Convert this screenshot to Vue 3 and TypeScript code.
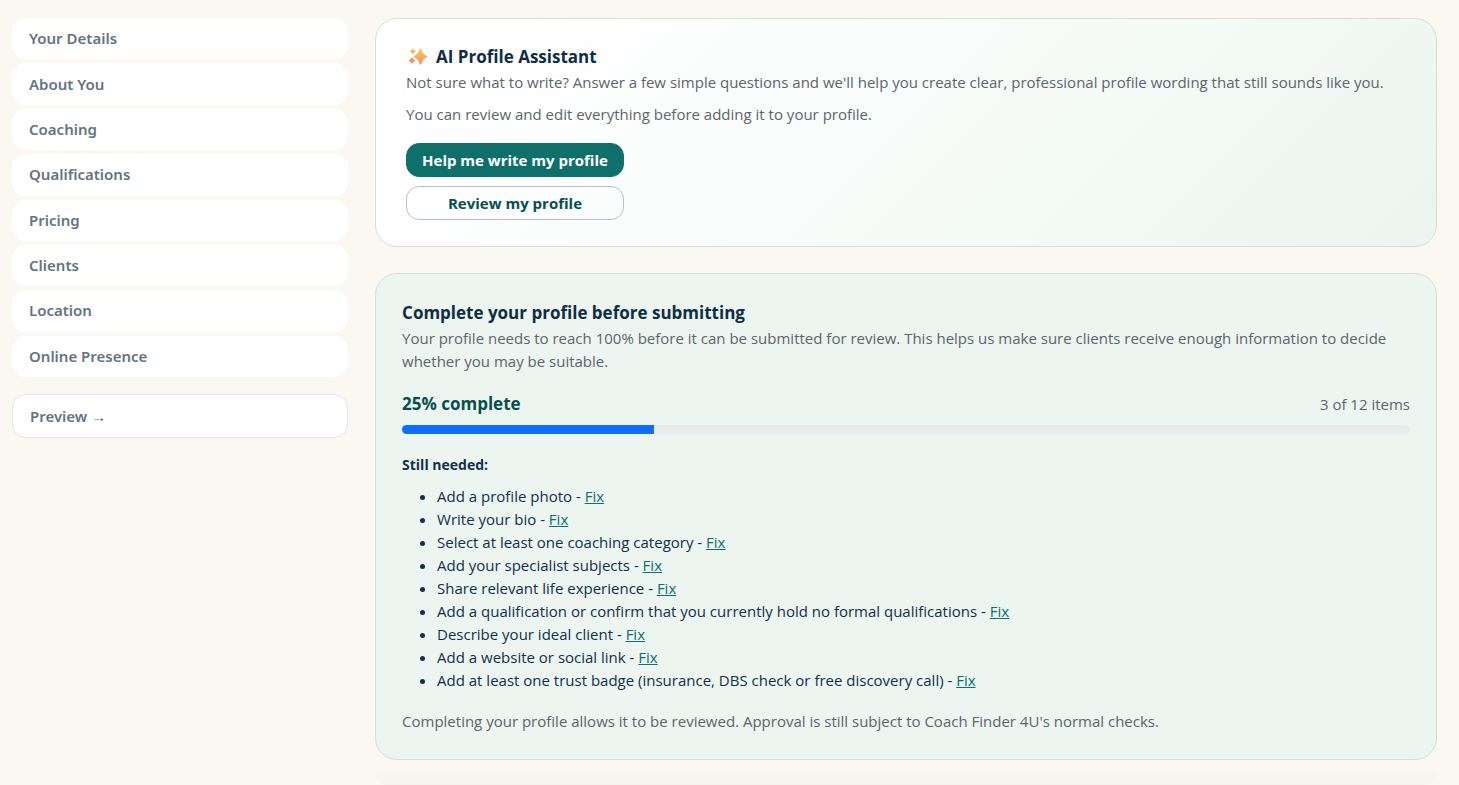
<script setup lang="ts">
interface Section {
  id: string
  label: string
}

interface MissingItem {
  text: string
  target: string
}

const sections: Section[] = [
  { id: 'details', label: 'Your Details' },
  { id: 'about', label: 'About You' },
  { id: 'coaching', label: 'Coaching' },
  { id: 'qualifications', label: 'Qualifications' },
  { id: 'pricing', label: 'Pricing' },
  { id: 'clients', label: 'Clients' },
  { id: 'location', label: 'Location' },
  { id: 'online', label: 'Online Presence' },
]

const missing: MissingItem[] = [
  { text: 'Add a profile photo', target: 'details' },
  { text: 'Write your bio', target: 'about' },
  { text: 'Select at least one coaching category', target: 'coaching' },
  { text: 'Add your specialist subjects', target: 'coaching' },
  { text: 'Share relevant life experience', target: 'about' },
  { text: 'Add a qualification or confirm that you currently hold no formal qualifications', target: 'qualifications' },
  { text: 'Describe your ideal client', target: 'clients' },
  { text: 'Add a website or social link', target: 'online' },
  { text: 'Add at least one trust badge (insurance, DBS check or free discovery call)', target: 'qualifications' },
]

const total = 12
const done = total - missing.length
const percent = Math.round((done / total) * 100)
</script>

<template>
  <div class="page">
    <nav class="sidebar" aria-label="Profile sections">
      <div class="sections">
        <a v-for="s in sections" :key="s.id" class="nav-item" :href="'#' + s.id">{{ s.label }}</a>
      </div>
      <a class="nav-item preview" href="#preview">Preview →</a>
    </nav>

    <main class="content">
      <section class="card assistant">
        <h2 class="title">
          <svg class="sparkles" viewBox="0 0 20 20" aria-hidden="true">
            <defs>
              <linearGradient id="spark" x1="0" y1="0" x2="0" y2="1">
                <stop offset="0" stop-color="#fcc850" />
                <stop offset="1" stop-color="#f98f6c" />
              </linearGradient>
            </defs>
            <path fill="url(#spark)" d="M12.5 1.6Q13.2 1.6 13.5 2.6L15.2 6.2Q15.5 6.9 16.2 7.2L18.6 8.7Q19.3 9.1 19.3 9.6Q19.3 10.2 18.6 10.5L16.2 12Q15.5 12.4 15.2 13.1L13.5 16.7Q13.2 17.6 12.5 17.6Q11.8 17.6 11.5 16.7L9.8 13.1Q9.5 12.4 8.8 12L6.4 10.5Q5.7 10.2 5.7 9.6Q5.7 9.1 6.4 8.7L8.8 7.2Q9.5 6.9 9.8 6.2L11.5 2.6Q11.8 1.6 12.5 1.6Z" />
            <path fill="#fab067" d="M4.8 1.2Q5.7 3.5 7.9 4.3Q5.7 5.1 4.8 7.4Q3.9 5.1 1.7 4.3Q3.9 3.5 4.8 1.2Z" />
            <path fill="#f88c6b" d="M4 10.1Q5.1 12.6 7.5 13.6Q5.1 14.6 4 17.1Q2.9 14.6 .5 13.6Q2.9 12.6 4 10.1Z" />
          </svg>
          <span>AI Profile Assistant</span>
        </h2>
        <p class="muted">
          Not sure what to write? Answer a few simple questions and we'll help you create clear, professional profile
          wording that still sounds like you.
        </p>
        <p class="muted second">You can review and edit everything before adding it to your profile.</p>
        <div class="actions">
          <button type="button" class="btn primary">Help me write my profile</button>
          <button type="button" class="btn outline">Review my profile</button>
        </div>
      </section>

      <section class="card completion">
        <h2 class="title">Complete your profile before submitting</h2>
        <p class="muted">
          Your profile needs to reach 100% before it can be submitted for review. This helps us make sure clients
          receive enough information to decide whether you may be suitable.
        </p>
        <div class="summary">
          <strong class="percent">{{ percent }}% complete</strong>
          <span class="muted">{{ done }} of {{ total }} items</span>
        </div>
        <div class="track" role="progressbar" aria-label="Profile completion" :aria-valuenow="percent" aria-valuemin="0" aria-valuemax="100">
          <div class="bar" :style="{ width: percent + '%' }"></div>
        </div>
        <h3 class="needed">Still needed:</h3>
        <ul class="list">
          <li v-for="m in missing" :key="m.text">{{ m.text }} - <a :href="'#' + m.target">Fix</a></li>
        </ul>
        <p class="muted">
          Completing your profile allows it to be reviewed. Approval is still subject to Coach Finder 4U's normal checks.
        </p>
      </section>

      <div class="fade"></div>
    </main>
  </div>
</template>

<style>
body {
  background: #fbf8f1;
}
</style>

<style scoped>
.page {
  box-sizing: border-box;
  display: grid;
  grid-template-columns: minmax(200px, 25fr) minmax(0, 79fr);
  gap: 27px;
  min-height: 100vh;
  padding: 18px 22px 0 12px;
  font-family: "Open Sans", "Noto Sans", sans-serif;
  font-size: 15px;
  line-height: 23px;
  color: #12304a;
}

.sections {
  display: grid;
  grid-auto-rows: 1fr;
  gap: 4px;
  min-height: 359px;
}

.nav-item {
  display: flex;
  align-items: center;
  min-height: 41px;
  box-sizing: border-box;
  padding: 0 17px;
  border-radius: 14px;
  background: #fff;
  color: #647480;
  font-family: "Noto Sans", "Open Sans", sans-serif;
  font-weight: 600;
  text-decoration: none;
}

.preview {
  min-height: 44px;
  margin-top: 17px;
  border: 1px solid #e1e5e9;
}

.content {
  display: flex;
  flex-direction: column;
}

.card {
  border: 1px solid #d3dfdc;
  border-radius: 22px;
}

.assistant {
  padding: 25px 30px 26px;
  background: linear-gradient(135deg, #fff 0%, #fff 12%, #f2f9f5 75%, #edf4f0 100%);
}

.completion {
  margin-top: 26px;
  padding: 26px;
  background: #ecf5f0;
}

.title {
  display: flex;
  align-items: center;
  gap: 8px;
  margin: 0 0 1px;
  font-size: 17px;
  font-weight: 700;
  line-height: 26px;
  color: #0f2d44;
}

.sparkles {
  width: 20px;
  height: 20px;
  margin-left: 2px;
}

p {
  margin: 0;
}

.muted {
  color: #5c656b;
}

.second {
  margin-top: 9px;
}

.actions {
  display: inline-grid;
  gap: 9px;
  margin-top: 17px;
  vertical-align: top;
}

.btn {
  height: 34px;
  padding: 0 15px;
  border: 1px solid #0f706a;
  border-radius: 13px;
  background: #0f706a;
  color: #fff;
  font: inherit;
  font-weight: 700;
  cursor: pointer;
}

.outline {
  border-color: #b9c2c9;
  background: transparent;
  color: #074f4d;
}

.summary {
  display: flex;
  align-items: center;
  justify-content: space-between;
  margin-top: 18px;
  line-height: 26px;
}

.percent {
  font-size: 17px;
  color: #074f4d;
}

.track {
  height: 9px;
  margin-top: 8px;
  border-radius: 5px;
  background: #e8ebee;
  overflow: hidden;
}

.bar {
  height: 100%;
  background: #0d6efd;
}

.needed {
  margin: 19px 0 9px;
  font-size: 14px;
  font-weight: 700;
  line-height: 23px;
}

.list {
  margin: 0 0 18px;
  padding-left: 35px;
}

.list a {
  color: #0f706a;
}

/* Soft shade under the last card */
.fade {
  flex: 1;
  min-height: 24px;
  border-radius: 22px;
  background: linear-gradient(transparent 20%, rgba(15, 45, 68, 0.02));
}
</style>
